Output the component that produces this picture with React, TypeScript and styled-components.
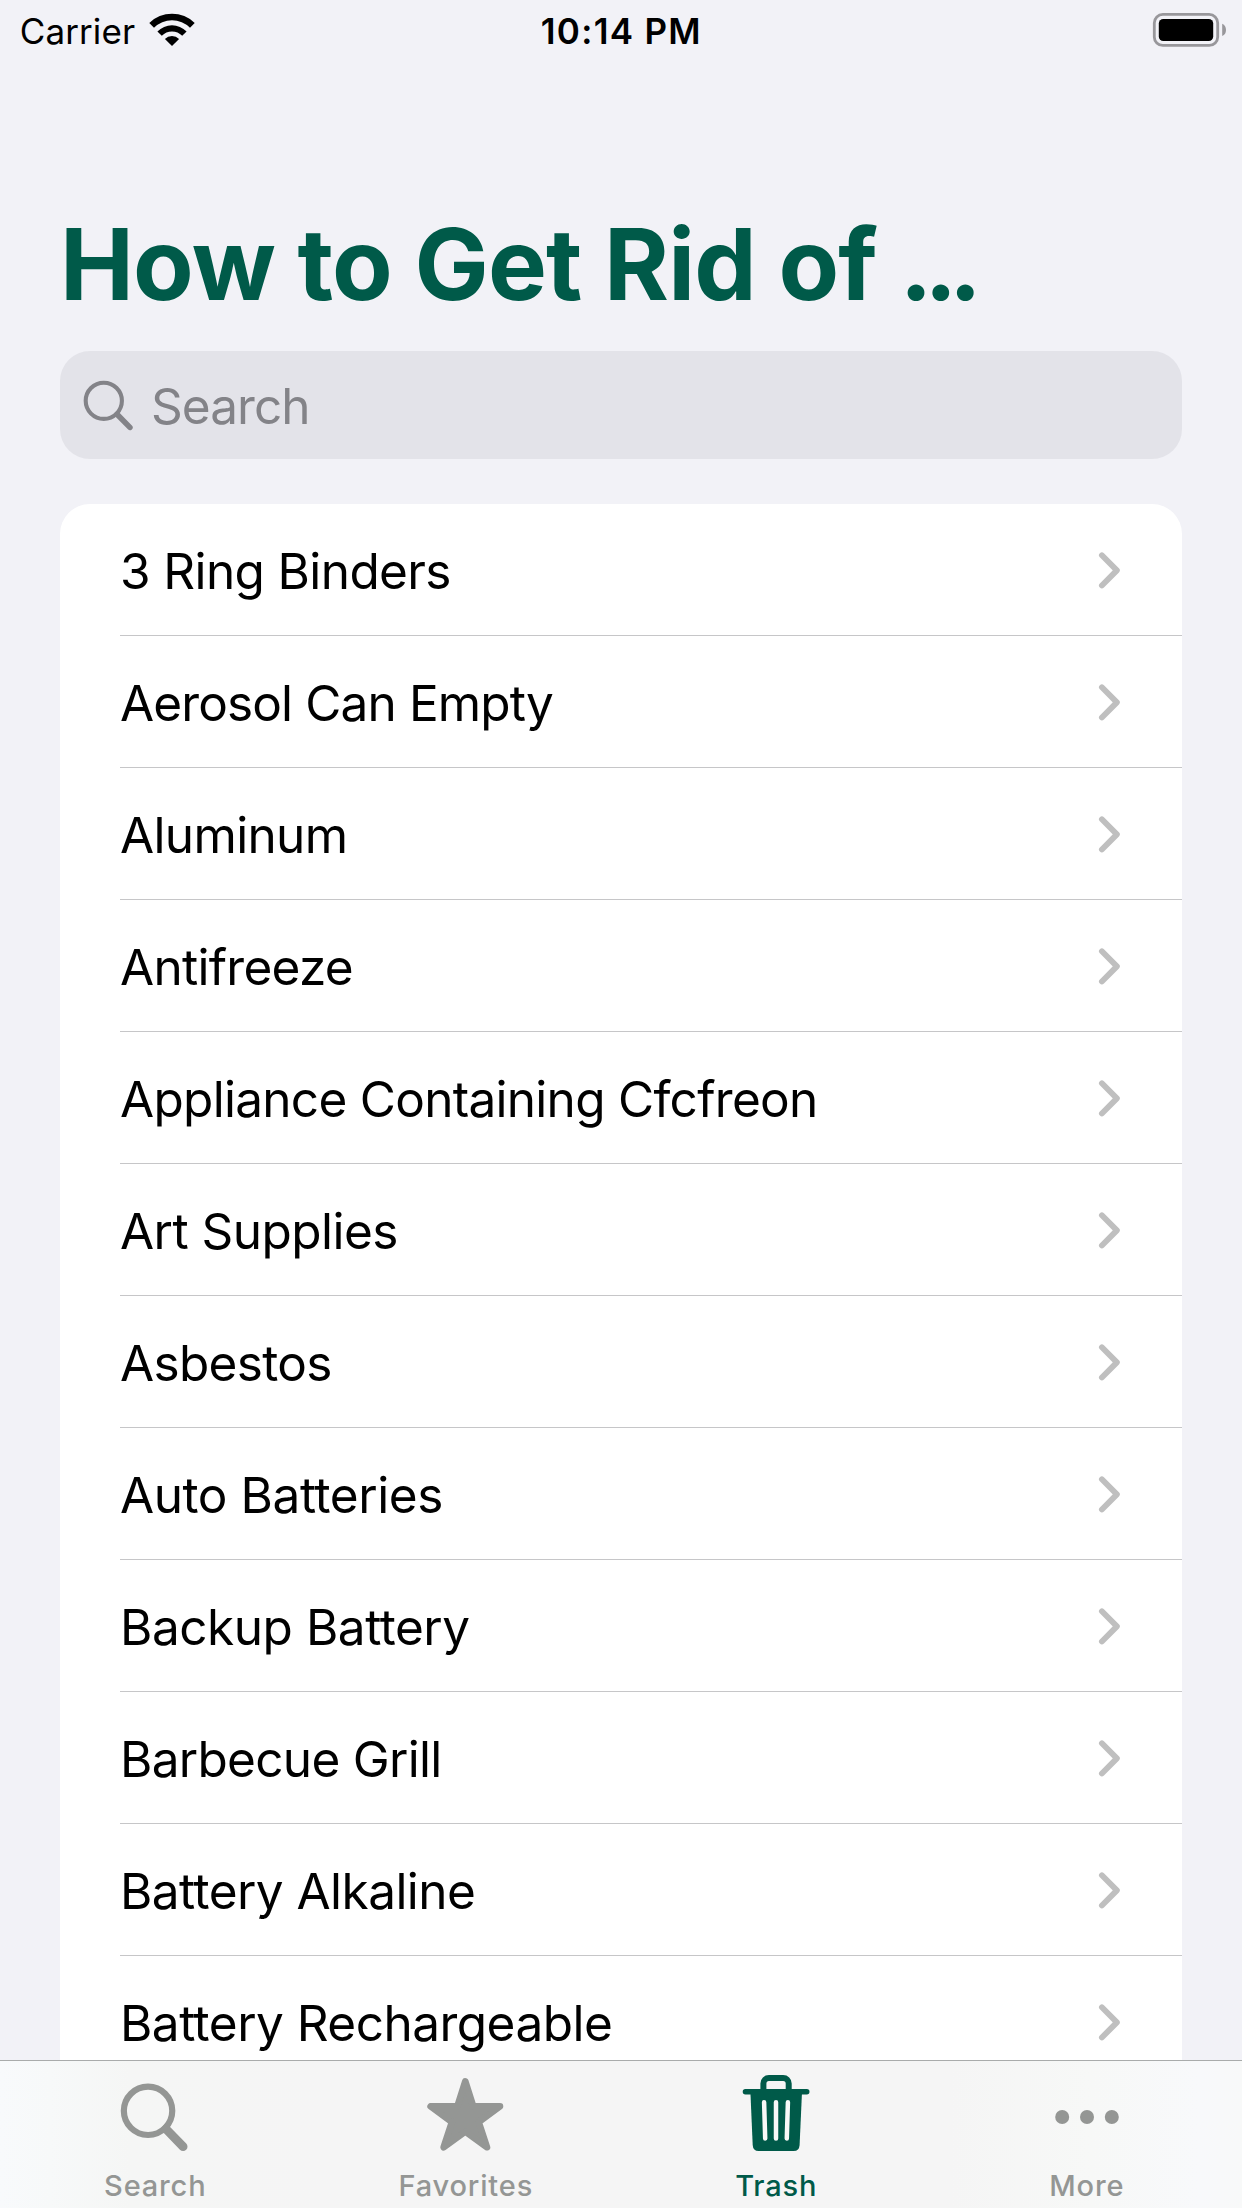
import React from "react";
import styled, { createGlobalStyle } from "styled-components";

const colors = {
  background: "#f2f2f7",
  brand: "#005a49",
  inactive: "#949694",
  placeholder: "#838388",
  separator: "#c6c6c8",
  chevron: "#bfbfbf",
};

const GlobalStyle = createGlobalStyle`
  html, body { margin: 0; padding: 0; background: ${colors.background}; }
  * { box-sizing: border-box; }
`;

const Screen = styled.div`
  display: flex;
  flex-direction: column;
  width: 1242px;
  height: 2208px;
  overflow: hidden;
  background: ${colors.background};
  color: #000;
  font-family: Inter, "Liberation Sans", sans-serif;
`;

const StatusBar = styled.header`
  display: grid;
  grid-template-columns: 1fr auto 1fr;
  height: 60px;
  padding: 0 15px 0 19.7px;
  font-size: 35px;
  line-height: 62px;
`;

const StatusLeft = styled.div`
  display: flex;
  align-items: flex-start;
  gap: 14px;
  letter-spacing: 0.13px;

  svg { margin-top: 11px; }
`;

const Clock = styled.time`
  margin: 0 2px 0 -2px;
  font-weight: 560;
  letter-spacing: 1.3px;
`;

const StatusRight = styled.div`
  display: flex;
  justify-content: flex-end;
  align-items: flex-start;

  svg { margin-top: 12px; }
`;

const Content = styled.main`
  flex: 1;
  min-height: 0;
  overflow: hidden;
  padding: 144px 60px 0;
`;

const Title = styled.h1`
  margin: 0;
  color: ${colors.brand};
  font-size: 99px;
  font-weight: 700;
  line-height: 120px;
  letter-spacing: -0.84px;
  white-space: pre;
`;

const Dots = styled.span`
  letter-spacing: -8.4px;
`;

const SearchField = styled.div`
  display: flex;
  align-items: center;
  gap: 15px;
  height: 108px;
  margin-top: 27px;
  padding-left: 20px;
  border-radius: 30px;
  background: #e3e3e9;
  color: ${colors.placeholder};
  font-size: 49.5px;
  line-height: 62px;
  letter-spacing: -0.95px;
`;

const Placeholder = styled.span`
  padding-top: 2px;
`;

const List = styled.ul`
  margin: 45px 0 0;
  padding: 0;
  list-style: none;
  border-radius: 30px 30px 0 0;
  background: #fff;
`;

const Row = styled.li`
  display: flex;
  align-items: center;
  justify-content: space-between;
  height: 132px;
  margin-left: 60px;
  padding-right: 61px;
  border-bottom: 1px solid ${colors.separator};
`;

const RowLabel = styled.span<{ $tracking: number }>`
  padding-top: 3px;
  font-size: 49.5px;
  line-height: 60px;
  letter-spacing: ${(p) => p.$tracking}px;
  white-space: nowrap;
`;

const TabBar = styled.nav`
  display: grid;
  grid-template-columns: repeat(4, 1fr);
  height: 148px;
  border-top: 1px solid #a9abab;
  background: linear-gradient(
    90deg,
    #f8fafc 0,
    #f7f9f9 50px,
    #f5f6f5 130px,
    #f5f5f5 320px,
    #f5f5f5 950px,
    #f7f8f7 1090px,
    #f8f9fb 1200px,
    #f8f9f9 100%
  );
`;

const Tab = styled.a<{ $active?: boolean }>`
  display: flex;
  flex-direction: column;
  align-items: center;
  padding-top: 6px;
  color: ${(p) => (p.$active ? colors.brand : colors.inactive)};
`;

const TabLabel = styled.span`
  margin-top: 12px;
  font-size: 29px;
  font-weight: 500;
  line-height: 37px;
  letter-spacing: 0.83px;
`;

const WifiIcon = () => (
  <svg width="46" height="36" viewBox="0 0 46 36">
    <path d="M.3 12A32.3 32.3 0 0 1 45.7 12L41 16.7A25.6 25.6 0 0 0 5 16.7Z" />
    <path d="M8.4 20.4A20.7 20.7 0 0 1 37.6 20.4L33.2 24.8A14.4 14.4 0 0 0 12.8 24.8Z" />
    <path d="M15.9 28A10 10 0 0 1 30.1 28L23 35Z" />
  </svg>
);

const BatteryIcon = () => (
  <svg width="75" height="36" viewBox="0 0 75 36">
    <rect x="2.3" y="2.4" width="63.4" height="31" rx="8.5" fill="none" stroke="#98979b" strokeWidth="2.8" />
    <rect x="6.8" y="7" width="54.4" height="22" rx="4.5" />
    <path d="M70.2 11.8Q74 13.5 74 18T70.2 24Z" fill="#98979b" />
  </svg>
);

const FieldSearchIcon = () => (
  <svg width="56" height="56" viewBox="0 0 56 56" fill="none" stroke="currentColor" strokeLinecap="round">
    <circle cx="23.8" cy="23.8" r="18.1" strokeWidth="4.1" />
    <path d="M37 37.3L49.9 50.4" strokeWidth="5.6" />
  </svg>
);

const Chevron = () => (
  <svg width="24" height="40" viewBox="0 0 24 40" fill="none" stroke={colors.chevron} strokeWidth="5.8" strokeLinecap="round" strokeLinejoin="round">
    <path d="M4.9 5.3L19.9 20.4L4.9 35.5" />
  </svg>
);

const TabIcon = ({ children }: { children: React.ReactNode }) => (
  <svg width="90" height="88" viewBox="0 0 90 88" fill="currentColor">
    {children}
  </svg>
);

const SearchGlyph = () => (
  <TabIcon>
    <g fill="none" stroke="currentColor" strokeLinecap="round">
      <circle cx="38.05" cy="43.8" r="24.2" strokeWidth="6.2" />
      <path d="M56 62L73.1 79.6" strokeWidth="8.8" />
    </g>
  </TabIcon>
);

const StarGlyph = () => (
  <TabIcon>
    <path
      transform="translate(44.3 51)"
      d="M0-36.7L8-11.6L34.7-11.6L13.4 4.1L21.7 29.3L0 13.6L-21.7 29.3L-13.4 4.1L-34.7-11.6L-8-11.6Z"
      stroke="currentColor"
      strokeWidth="6.6"
      strokeLinejoin="round"
    />
  </TabIcon>
);

const TrashGlyph = () => (
  <TabIcon>
    <path d="M32.4 25V16.5a5.5 5.5 0 0 1 5.5-5.5H52.2a5.5 5.5 0 0 1 5.5 5.5V25" fill="none" stroke="currentColor" strokeWidth="6" />
    <rect x="11.7" y="22" width="66.8" height="5.4" rx="2.7" />
    <path d="M19.4 25H71L68.6 78q-.3 6-6 6H27.7q-5.7 0-6-6Z" />
    <g stroke="#f8f9f8" strokeWidth="4.5" strokeLinecap="round">
      <path d="M33.1 35.3L34.2 71.5M45 35.3V71.5M56.9 35.3L55.8 71.5" />
    </g>
  </TabIcon>
);

const MoreGlyph = () => (
  <TabIcon>
    <circle cx="20.2" cy="50" r="7" />
    <circle cx="45" cy="50" r="7" />
    <circle cx="69.8" cy="50" r="7" />
  </TabIcon>
);

const items = [
  { name: "3 Ring Binders", tracking: -0.61 },
  { name: "Aerosol Can Empty", tracking: -0.87 },
  { name: "Aluminum", tracking: -0.65 },
  { name: "Antifreeze", tracking: -0.72 },
  { name: "Appliance Containing Cfcfreon", tracking: -0.71 },
  { name: "Art Supplies", tracking: -0.54 },
  { name: "Asbestos", tracking: -0.66 },
  { name: "Auto Batteries", tracking: -0.43 },
  { name: "Backup Battery", tracking: -0.46 },
  { name: "Barbecue Grill", tracking: -0.7 },
  { name: "Battery Alkaline", tracking: -0.55 },
  { name: "Battery Rechargeable", tracking: -0.52 },
];

const tabs = [
  { label: "Search", Glyph: SearchGlyph },
  { label: "Favorites", Glyph: StarGlyph },
  { label: "Trash", Glyph: TrashGlyph, active: true },
  { label: "More", Glyph: MoreGlyph },
];

export default function App() {
  return (
    <>
      <GlobalStyle />
      <Screen>
        <StatusBar>
          <StatusLeft>
            Carrier
            <WifiIcon />
          </StatusLeft>
          <Clock>10:14 PM</Clock>
          <StatusRight>
            <BatteryIcon />
          </StatusRight>
        </StatusBar>
        <Content>
          <Title>
            How to Get Rid of <Dots>...</Dots>
          </Title>
          <SearchField>
            <FieldSearchIcon />
            <Placeholder>Search</Placeholder>
          </SearchField>
          <List>
            {items.map((item) => (
              <Row key={item.name}>
                <RowLabel $tracking={item.tracking}>{item.name}</RowLabel>
                <Chevron />
              </Row>
            ))}
          </List>
        </Content>
        <TabBar>
          {tabs.map(({ label, Glyph, active }) => (
            <Tab key={label} $active={active}>
              <Glyph />
              <TabLabel>{label}</TabLabel>
            </Tab>
          ))}
        </TabBar>
      </Screen>
    </>
  );
}
